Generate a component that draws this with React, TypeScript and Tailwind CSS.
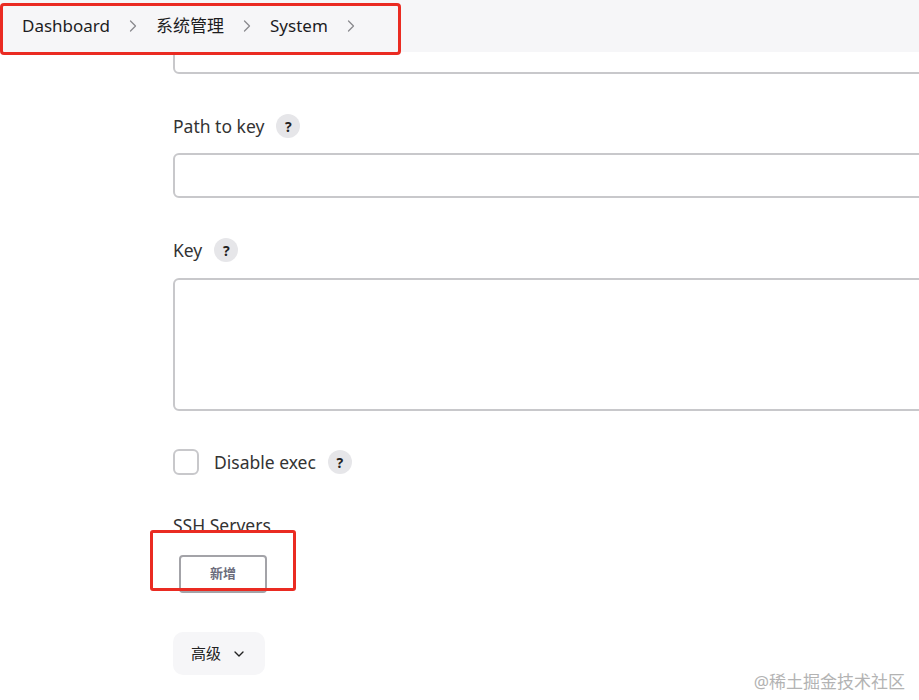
import { ChevronRight, ChevronDown } from 'lucide-react';

function Help() {
  return (
    <span className="ml-[12px] inline-flex h-6 w-6 items-center justify-center rounded-full bg-[#e6e6e9] text-[14px] font-bold text-[#222]">
      ?
    </span>
  );
}

export default function App() {
  const font = { fontFamily: '"Noto Sans", "Noto Sans CJK SC", sans-serif' };
  return (
    <div className="relative h-[700px] w-[919px] overflow-hidden bg-white text-[#1d1d1f]" style={font}>
      {/* Breadcrumb bar */}
      <header className="relative z-10 flex h-[52px] items-center bg-[#f6f6f8] pl-[22px] text-[17px]">
        <span>Dashboard</span>
        <ChevronRight className="mx-[13px] h-5 w-5 text-[#8a8a8e]" strokeWidth={1.5} />
        <span>系统管理</span>
        <ChevronRight className="mx-[13px] h-5 w-5 text-[#8a8a8e]" strokeWidth={1.5} />
        <span>System</span>
        <ChevronRight className="mx-[13px] h-5 w-5 text-[#8a8a8e]" strokeWidth={1.5} />
      </header>

      {/* Form */}
      <div className="pl-[173px]">
        <div className="mr-[-12px] mt-[-24px] h-[46px] rounded-[6px] border-2 border-[#c8c8cb]" />

        <div className="mt-[40px] flex h-6 items-center text-[17.5px] text-[#333]">
          Path to key
          <Help />
        </div>
        <div className="mr-[-12px] mt-[15px] h-[45px] rounded-[6px] border-2 border-[#c8c8cb]" />

        <div className="mt-[40px] flex h-6 items-center text-[17.5px] text-[#333]">
          Key
          <Help />
        </div>
        <div className="mr-[-12px] mt-[16px] h-[133px] rounded-[6px] border-2 border-[#c8c8cb]" />

        <div className="mt-[38px] flex h-[26px] items-center text-[17.5px] text-[#333]">
          <span className="h-[26px] w-[26px] rounded-[6px] border-2 border-[#c8c8cb]" />
          <span className="ml-[15px]">Disable exec</span>
          <Help />
        </div>

        <div className="mt-[38px] h-[17px] overflow-hidden text-[17.5px] leading-6 text-[#333]">SSH Servers</div>

        <button className="ml-[6px] mt-[25px] flex h-[38px] w-[88px] items-center justify-center rounded-[4px] border-2 border-[#a3a3a8] bg-white text-[13px] font-bold text-[#6c6c7c]">
          新增
        </button>

        <button className="mt-[39px] flex h-[43px] w-[92px] items-center justify-center gap-[10px] rounded-[10px] bg-[#f6f6f8] text-[15px] text-[#222]">
          高级
          <ChevronDown className="h-4 w-4" strokeWidth={2} />
        </button>
      </div>

      {/* Annotation boxes */}
      <div className="absolute left-0 top-[3px] z-20 h-[52px] w-[401px] rounded-[4px] border-[3px] border-[#ea2b22]" />
      <div className="absolute left-[150px] top-[530px] z-20 h-[61px] w-[146px] rounded-[3px] border-[3px] border-[#ea2b22]" />

      {/* Watermark */}
      <div className="absolute bottom-[6px] right-[14px] text-[17px] text-[#b3b3b3]">@稀土掘金技术社区</div>
    </div>
  );
}
